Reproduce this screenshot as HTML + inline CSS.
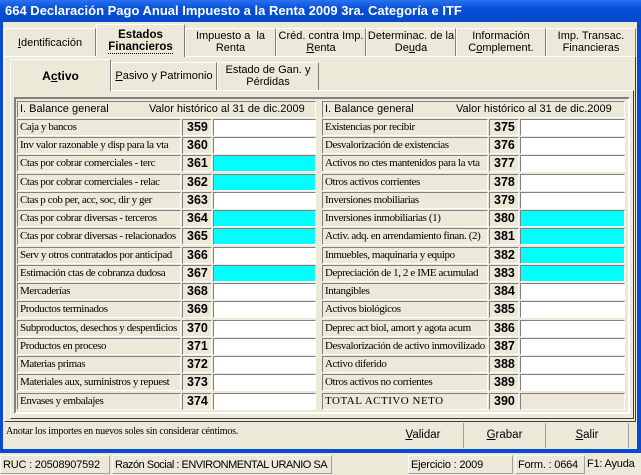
<!DOCTYPE html>
<html><head><meta charset="utf-8"><style>
*{box-sizing:border-box;margin:0;padding:0}
body{width:641px;height:475px;overflow:hidden;background:#ece9d8;font-family:"Liberation Sans",sans-serif;font-size:11px;color:#000;position:relative}
.a{position:absolute}
#title{left:0;top:0;width:641px;height:22px;background:linear-gradient(#2a72f0,#0650d8 40%,#0548c8);color:#fff;font-weight:bold;font-size:13px;padding:3px 0 0 5px;white-space:nowrap}
.bl{background:#0a4ad0}
.tab{position:absolute;border:1px solid #fff;border-right-color:#808080;border-bottom:none;background:#ece9d8;text-align:center;font-size:11px;line-height:12px;color:#000;white-space:nowrap}
.lab{position:absolute;height:17px;border:1px solid;border-color:#808080 #fff #fff #808080;font-family:"Liberation Serif",serif;font-size:11px;line-height:15px;padding-left:2px;white-space:nowrap;overflow:hidden;letter-spacing:-0.4px}
.code{position:absolute;height:17px;width:30px;border:1px solid;border-color:#808080 #fff #fff #808080;font-weight:bold;font-size:12.5px;line-height:15px;padding-left:4px}
.val{position:absolute;height:17px;border:1px solid;border-color:#808080 #fff #fff #808080;background:#fff}
.c{background:#00ffff}
.btn{position:absolute;top:423px;height:25px;text-align:center;line-height:25px;font-size:11.5px;border-right:1px solid #a0a0a0}
.st{position:absolute;top:455px;height:19px;line-height:18px;font-size:11px;border:1px solid;border-color:#fff #a0a0a0 #a0a0a0 #fff;padding-left:2px;white-space:nowrap;overflow:hidden;letter-spacing:-0.2px}
</style></head><body>
<div id="title" class="a">664 Declaración Pago Anual Impuesto a la Renta 2009 3ra. Categoría e ITF</div>
<div class="a bl" style="left:0;top:22px;width:3px;height:430px"></div>
<div class="a bl" style="left:637px;top:22px;width:4px;height:430px"></div>
<div class="a bl" style="left:0;top:449px;width:641px;height:4px"></div>

<div class="tab" style="left:4px;top:28px;width:92px;height:28px;padding-top:8px"><u>I</u>dentificación</div>
<div class="tab" style="left:96px;top:24px;width:89px;height:33px;padding-top:4px;font-weight:bold;font-size:11.5px;z-index:2">Estados<br><span style="border-bottom:1px dotted #000">Financieros</span></div>
<div class="tab" style="left:185px;top:28px;width:91px;height:28px;padding-top:1px">Impuesto a &nbsp;la<br>Renta</div>
<div class="tab" style="left:276px;top:28px;width:90px;height:28px;padding-top:1px">Créd. contra Imp.<br><u>R</u>enta</div>
<div class="tab" style="left:366px;top:28px;width:90px;height:28px;padding-top:1px">Determinac. de la<br>De<u>u</u>da</div>
<div class="tab" style="left:456px;top:28px;width:90px;height:28px;padding-top:1px">Información<br>C<u>o</u>mplement.</div>
<div class="tab" style="left:546px;top:28px;width:90px;height:28px;padding-top:1px">Imp. Transac.<br>Financieras</div>

<div class="a" style="left:4px;top:56px;width:632px;height:366px;border:1px solid;border-color:#fff #404040 #404040 #fff"></div>

<div class="tab" style="left:10px;top:59px;width:101px;height:32px;padding-top:10px;font-weight:bold;font-size:12px;z-index:2">A<u>c</u>tivo</div>
<div class="tab" style="left:111px;top:62px;width:106px;height:28px;padding-top:7px"><u>P</u>asivo y Patrimonio</div>
<div class="tab" style="left:217px;top:62px;width:102px;height:28px;padding-top:1px">Estado de Gan. y<br>Pérdidas</div>
<div class="a" style="left:10px;top:90px;width:624px;height:329px;border:1px solid;border-color:#fff #404040 #404040 #fff"></div>

<div class="a" style="left:14px;top:97px;width:616px;height:317px;border:2px solid;border-color:#808080 #fff #fff #808080"></div>

<div class="lab" style="left:17px;top:101px;width:299px;font-family:'Liberation Sans',sans-serif;font-size:11px;letter-spacing:0">I. Balance general<span style="position:absolute;left:131px">Valor histórico al 31 de dic.2009</span></div>
<div class="lab" style="left:322px;top:101px;width:303px;font-family:'Liberation Sans',sans-serif;font-size:11px;letter-spacing:0">I. Balance general<span style="position:absolute;left:133px">Valor histórico al 31 de dic.2009</span></div>

<div class="lab" style="left:17px;top:119px;width:164px">Caja y bancos</div><div class="code" style="left:182px;top:119px">359</div><div class="val" style="left:213px;top:119px;width:103px"></div>
<div class="lab" style="left:17px;top:137px;width:164px">Inv valor razonable y disp para la vta</div><div class="code" style="left:182px;top:137px">360</div><div class="val" style="left:213px;top:137px;width:103px"></div>
<div class="lab" style="left:17px;top:155px;width:164px">Ctas por cobrar comerciales - terc</div><div class="code" style="left:182px;top:155px">361</div><div class="val c" style="left:213px;top:155px;width:103px"></div>
<div class="lab" style="left:17px;top:174px;width:164px">Ctas por cobrar comerciales - relac</div><div class="code" style="left:182px;top:174px">362</div><div class="val c" style="left:213px;top:174px;width:103px"></div>
<div class="lab" style="left:17px;top:192px;width:164px">Ctas p cob per, acc, soc, dir y ger</div><div class="code" style="left:182px;top:192px">363</div><div class="val" style="left:213px;top:192px;width:103px"></div>
<div class="lab" style="left:17px;top:210px;width:164px">Ctas por cobrar diversas - terceros</div><div class="code" style="left:182px;top:210px">364</div><div class="val c" style="left:213px;top:210px;width:103px"></div>
<div class="lab" style="left:17px;top:228px;width:164px">Ctas por cobrar diversas - relacionados</div><div class="code" style="left:182px;top:228px">365</div><div class="val c" style="left:213px;top:228px;width:103px"></div>
<div class="lab" style="left:17px;top:247px;width:164px">Serv y otros contratados por anticipad</div><div class="code" style="left:182px;top:247px">366</div><div class="val" style="left:213px;top:247px;width:103px"></div>
<div class="lab" style="left:17px;top:265px;width:164px">Estimación ctas de cobranza dudosa</div><div class="code" style="left:182px;top:265px">367</div><div class="val c" style="left:213px;top:265px;width:103px"></div>
<div class="lab" style="left:17px;top:283px;width:164px">Mercaderías</div><div class="code" style="left:182px;top:283px">368</div><div class="val" style="left:213px;top:283px;width:103px"></div>
<div class="lab" style="left:17px;top:301px;width:164px">Productos terminados</div><div class="code" style="left:182px;top:301px">369</div><div class="val" style="left:213px;top:301px;width:103px"></div>
<div class="lab" style="left:17px;top:320px;width:164px">Subproductos, desechos y desperdicios</div><div class="code" style="left:182px;top:320px">370</div><div class="val" style="left:213px;top:320px;width:103px"></div>
<div class="lab" style="left:17px;top:338px;width:164px">Productos en proceso</div><div class="code" style="left:182px;top:338px">371</div><div class="val" style="left:213px;top:338px;width:103px"></div>
<div class="lab" style="left:17px;top:356px;width:164px">Materias primas</div><div class="code" style="left:182px;top:356px">372</div><div class="val" style="left:213px;top:356px;width:103px"></div>
<div class="lab" style="left:17px;top:374px;width:164px">Materiales aux, suministros y repuest</div><div class="code" style="left:182px;top:374px">373</div><div class="val" style="left:213px;top:374px;width:103px"></div>
<div class="lab" style="left:17px;top:393px;width:164px">Envases y embalajes</div><div class="code" style="left:182px;top:393px">374</div><div class="val" style="left:213px;top:393px;width:103px"></div>

<div class="lab" style="left:322px;top:119px;width:166px">Existencias por recibir</div><div class="code" style="left:489px;top:119px">375</div><div class="val" style="left:520px;top:119px;width:105px"></div>
<div class="lab" style="left:322px;top:137px;width:166px">Desvalorización de existencias</div><div class="code" style="left:489px;top:137px">376</div><div class="val" style="left:520px;top:137px;width:105px"></div>
<div class="lab" style="left:322px;top:155px;width:166px">Activos no ctes mantenidos para la vta</div><div class="code" style="left:489px;top:155px">377</div><div class="val" style="left:520px;top:155px;width:105px"></div>
<div class="lab" style="left:322px;top:174px;width:166px">Otros activos corrientes</div><div class="code" style="left:489px;top:174px">378</div><div class="val" style="left:520px;top:174px;width:105px"></div>
<div class="lab" style="left:322px;top:192px;width:166px">Inversiones mobiliarias</div><div class="code" style="left:489px;top:192px">379</div><div class="val" style="left:520px;top:192px;width:105px"></div>
<div class="lab" style="left:322px;top:210px;width:166px">Inversiones inmobiliarias (1)</div><div class="code" style="left:489px;top:210px">380</div><div class="val c" style="left:520px;top:210px;width:105px"></div>
<div class="lab" style="left:322px;top:228px;width:166px">Activ. adq. en arrendamiento finan. (2)</div><div class="code" style="left:489px;top:228px">381</div><div class="val c" style="left:520px;top:228px;width:105px"></div>
<div class="lab" style="left:322px;top:247px;width:166px">Inmuebles, maquinaria y equipo</div><div class="code" style="left:489px;top:247px">382</div><div class="val c" style="left:520px;top:247px;width:105px"></div>
<div class="lab" style="left:322px;top:265px;width:166px">Depreciación de 1, 2 e IME acumulad</div><div class="code" style="left:489px;top:265px">383</div><div class="val c" style="left:520px;top:265px;width:105px"></div>
<div class="lab" style="left:322px;top:283px;width:166px">Intangibles</div><div class="code" style="left:489px;top:283px">384</div><div class="val" style="left:520px;top:283px;width:105px"></div>
<div class="lab" style="left:322px;top:301px;width:166px">Activos biológicos</div><div class="code" style="left:489px;top:301px">385</div><div class="val" style="left:520px;top:301px;width:105px"></div>
<div class="lab" style="left:322px;top:320px;width:166px">Deprec act biol, amort y agota acum</div><div class="code" style="left:489px;top:320px">386</div><div class="val" style="left:520px;top:320px;width:105px"></div>
<div class="lab" style="left:322px;top:338px;width:166px">Desvalorización de activo inmovilizado</div><div class="code" style="left:489px;top:338px">387</div><div class="val" style="left:520px;top:338px;width:105px"></div>
<div class="lab" style="left:322px;top:356px;width:166px">Activo diferido</div><div class="code" style="left:489px;top:356px">388</div><div class="val" style="left:520px;top:356px;width:105px"></div>
<div class="lab" style="left:322px;top:374px;width:166px">Otros activos no corrientes</div><div class="code" style="left:489px;top:374px">389</div><div class="val" style="left:520px;top:374px;width:105px"></div>
<div class="lab" style="left:322px;top:393px;width:166px;letter-spacing:0.5px">TOTAL ACTIVO NETO</div><div class="code" style="left:489px;top:393px">390</div><div class="val" style="left:520px;top:393px;width:105px;background:#ece9d8"></div>

<div class="a" style="left:6px;top:426px;font-family:'Liberation Serif',serif;font-size:10px;letter-spacing:-0.2px;white-space:nowrap">Anotar los importes en nuevos soles sin considerar céntimos.</div>
<div class="btn" style="left:383px;width:81px"><u>V</u>alidar</div>
<div class="btn" style="left:464px;width:82px"><u>G</u>rabar</div>
<div class="btn" style="left:546px;width:83px"><u>S</u>alir</div>

<div class="st" style="left:0;width:110px">RUC : 20508907592</div>
<div class="st" style="left:112px;width:220px;letter-spacing:-0.5px">Razón Social : ENVIRONMENTAL URANIO SA</div>
<div class="st" style="left:408px;width:105px">Ejercicio : 2009</div>
<div class="st" style="left:515px;width:70px">Form. : 0664</div>
<div class="st" style="left:585px;width:56px;border:none">F1: Ayuda</div>
</body></html>
